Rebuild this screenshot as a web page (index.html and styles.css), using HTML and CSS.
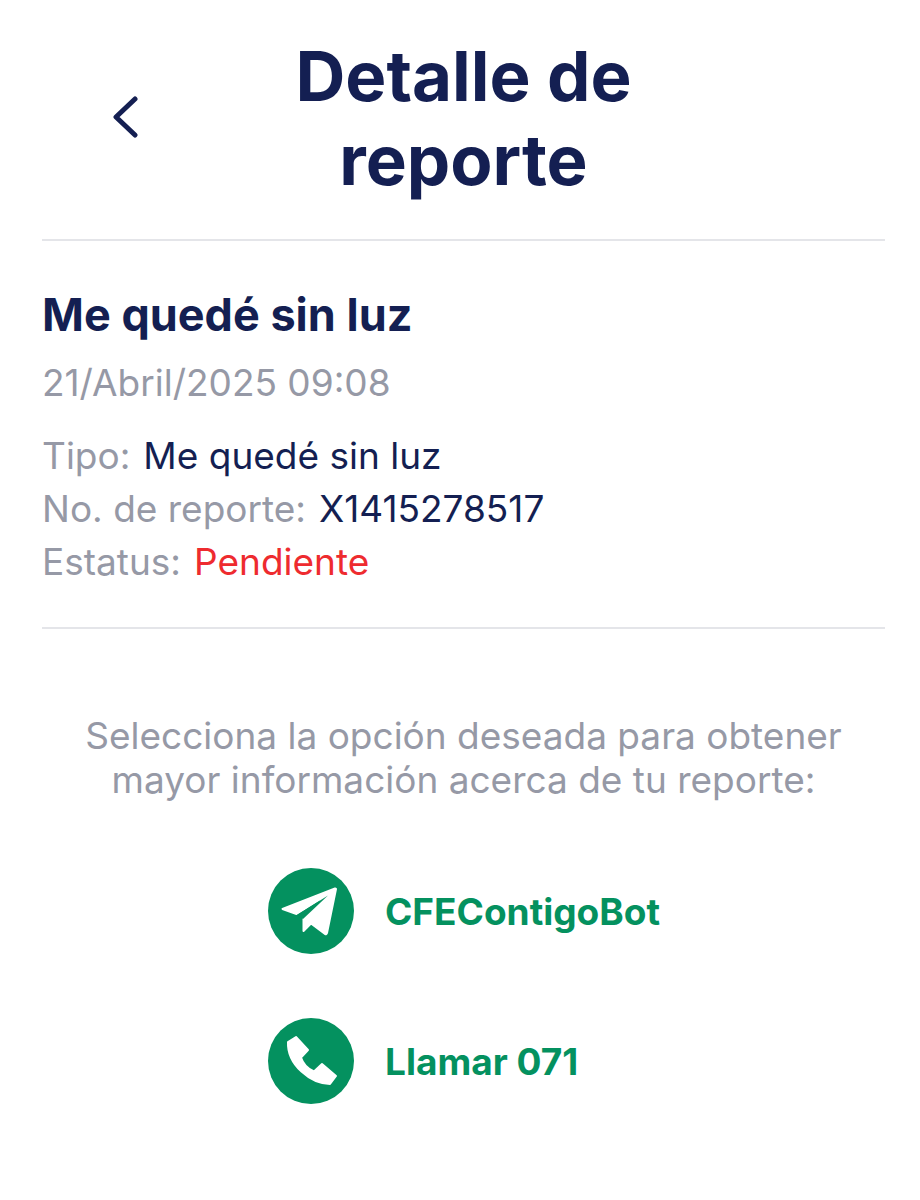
FILE: index.html
```html
<!DOCTYPE html>
<html lang="es">

<head>
    <meta charset="utf-8" />
    <title>Detalle de reporte</title>
    <meta name="viewport" content="width=device-width, initial-scale=1">
    <link rel="stylesheet" href="styles.css">
</head>

<body>
    <header class="header">
        <button class="back" type="button" aria-label="Regresar">
            <svg width="26" height="44" viewBox="0 0 26 44" fill="none" stroke="currentColor" stroke-width="5"
                stroke-linecap="round" stroke-linejoin="round">
                <path d="M23 3L4 21L23 39" />
            </svg>
        </button>
        <h1 class="title">Detalle de reporte</h1>
    </header>

    <section class="report">
        <h2 class="report-name">Me quedé sin luz</h2>
        <p class="date">21/Abril/2025 09:08</p>
        <dl class="details">
            <div class="row">
                <dt>Tipo:</dt>
                <dd>Me quedé sin luz</dd>
            </div>
            <div class="row">
                <dt>No. de reporte:</dt>
                <dd>X1415278517</dd>
            </div>
            <div class="row">
                <dt>Estatus:</dt>
                <dd class="pending">Pendiente</dd>
            </div>
        </dl>
    </section>

    <section class="contact">
        <p class="hint">Selecciona la opción deseada para obtener mayor información acerca de tu reporte:</p>
        <div class="options">
            <a class="option" href="#">
                <svg class="icon" viewBox="0 0 88 88">
                    <circle cx="44" cy="44" r="43" />
                    <path class="shape" d="M68 21.500L15.500 42L29.500 47L60 28L36.500 51.500V64L44 56.500L58 67Q59.500 67.500 60 66L69 22Z" />
                    <path d="M61 28.500L30 48L36 52Z" />
                </svg>
                CFEContigoBot
            </a>
            <a class="option" href="tel:071">
                <svg class="icon" viewBox="0 0 88 88">
                    <circle cx="44" cy="44" r="43" />
                    <path class="shape" d="M21 25L29 20L41 33L34 40.500Q37 50 47 54.500L55 47L69 59L63 67C44 67 20 48 21 25Z" />
                </svg>
                Llamar 071
            </a>
        </div>
    </section>
</body>

</html>
```
FILE: styles.css
```css
* {
    box-sizing: border-box;
}

body {
    margin: 0;
    padding: 34px 35px 0 42px;
    background: #fff;
    color: #141f52;
    font-family: Inter, sans-serif;
    font-size: 37px;
}

h1, h2, p, dl, dd {
    margin: 0;
}

.header {
    display: grid;
    grid-template-columns: 1fr 2fr 1fr;
    align-items: center;
    padding-bottom: 37px;
    border-bottom: 2px solid #e4e5e9;
}

.back {
    justify-self: start;
    display: flex;
    margin-left: 70px;
    padding: 0;
    border: 0;
    background: none;
    color: inherit;
}

.title {
    font-size: 69px;
    font-weight: 700;
    line-height: 84px;
    text-align: center;
}

.report {
    padding: 46px 0 39px;
    border-bottom: 2px solid #e4e5e9;
}

.report-name {
    font-size: 45px;
    font-weight: 700;
    line-height: 56px;
}

.date {
    margin: 13px 0 20px;
    color: #9699a6;
    line-height: 53px;
}

.row {
    display: flex;
    gap: 13px;
    line-height: 53px;
}

.row dt {
    color: #9699a6;
}

.row .pending {
    color: #ee2b2f;
}

.contact {
    padding: 85px 32px 0;
}

.hint {
    color: #9699a6;
    line-height: 44px;
    text-align: center;
}

.options {
    display: flex;
    flex-direction: column;
    gap: 62px;
    width: fit-content;
    margin: 65px auto 0;
}

.option {
    display: flex;
    align-items: center;
    gap: 30px;
    color: #04915f;
    font-weight: 700;
    text-decoration: none;
}

.icon {
    width: 88px;
    height: 88px;
    fill: currentColor;
}

.icon .shape {
    fill: #fff;
    stroke: #fff;
    stroke-width: 2;
    stroke-linejoin: round;
}
```
